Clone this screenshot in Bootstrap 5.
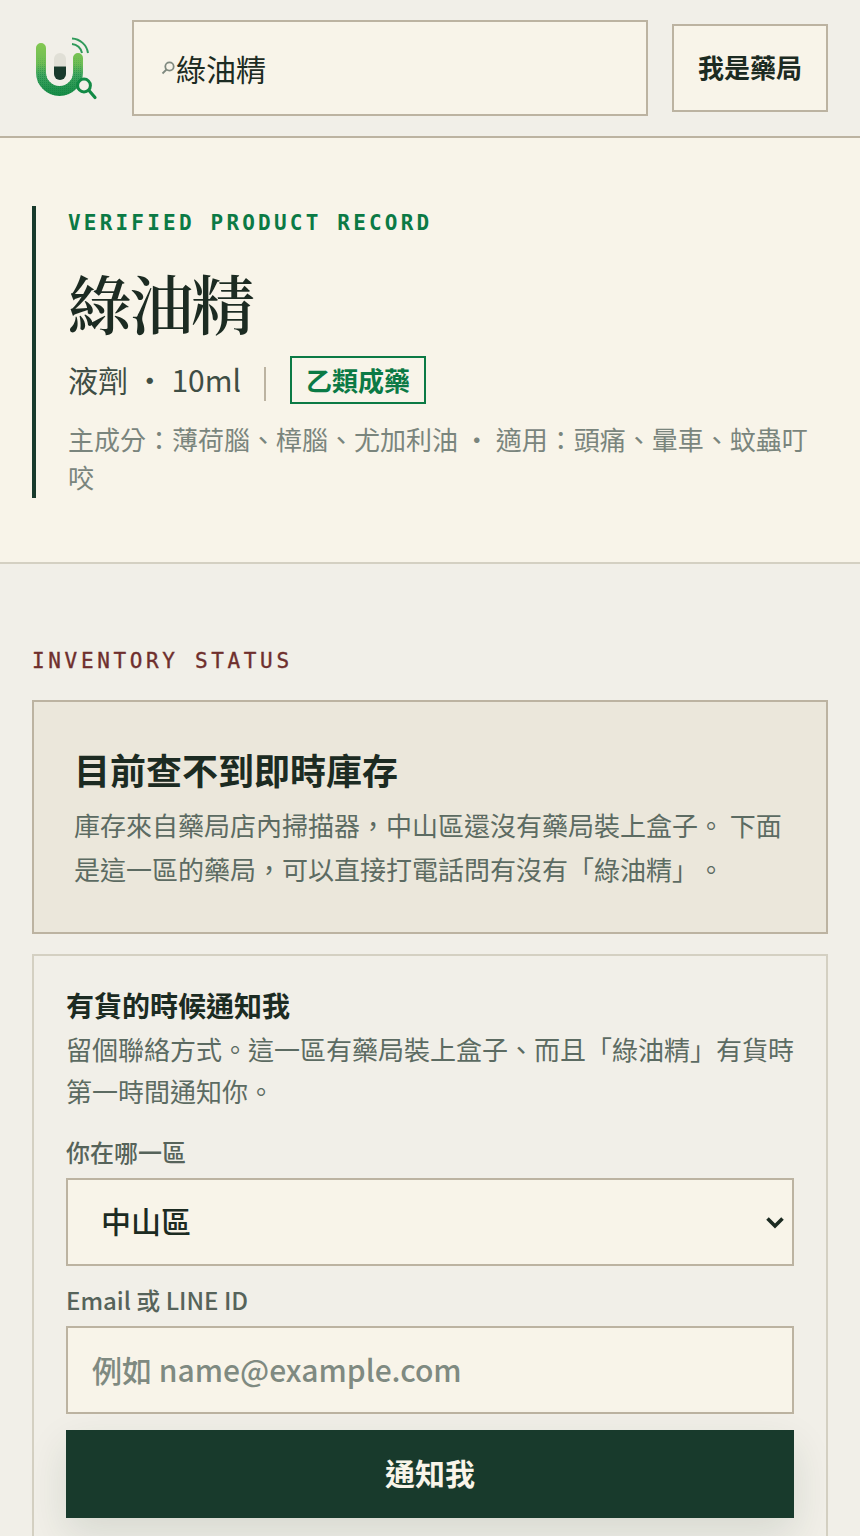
<!DOCTYPE html>
<html lang="zh-Hant">
<head>
<meta charset="utf-8">
<meta name="viewport" content="width=device-width, initial-scale=1">
<link href="https://cdn.jsdelivr.net/npm/bootstrap@5.3.0/dist/css/bootstrap.min.css" rel="stylesheet">
<style>
html,body{height:1536px;overflow:hidden}
body{background:#f1efe8;color:#1c2b22;font-family:"Noto Sans CJK TC","Noto Sans",sans-serif;text-spacing-trim:space-all}
.top-bar{height:138px;padding:20px 32px;gap:24px;border-bottom:2px solid #bcb3a1;background:#f1efe8}
.logo-mark{width:76px;height:76px;flex:none}
.search-box{flex:1;height:96px;border:2px solid #bcb3a1;background:#f8f4e9;padding:0 26px;font-size:30px}
.search-glyph{width:16px;height:18px;flex:none}
.pharm-btn{width:156px;height:88px;border:2px solid #bcb3a1;background:#f8f4e9;font-size:26px;font-weight:700;color:#1c2b22;border-radius:0;padding:0 0 3px}
.hero-band{height:426px;background:#f8f4e9;border-bottom:2px solid #d4d0c2;padding:68px 32px 0}
.hero-inner{border-left:4px solid #183a2c;padding-left:32px;padding-top:1px;height:292px}
.mono-tag{font-family:"DejaVu Sans Mono",monospace;font-size:21px;line-height:32px}
.tag-green{color:#0b7a45;font-weight:700;letter-spacing:3.2px}
.title-main{font-family:"Noto Serif CJK TC","Noto Sans CJK TC",serif;font-size:64px;font-weight:600;letter-spacing:-2.5px;line-height:84px;margin:20px 0 0;color:#1c2b22}
.meta-row{font-size:30px;color:#3f4e45;margin-top:13px;gap:24px}
.meta-row>span:first-child{line-height:44px;padding-bottom:2px}
.meta-sep{width:2px;height:34px;background:#bcb3a1;margin:7px 0 0 -1px}
.class-tag{border:2px solid #0b7a45;color:#0b7a45;font-size:26px;font-weight:700;line-height:44px;padding:0 14px}
.hero-note{font-size:26px;line-height:38px;color:#7a857d;margin:16px 0 0}
.status-sec{padding:81px 32px 0}
.tag-red{color:#6f2f2d;letter-spacing:3.65px;margin-bottom:23px;-webkit-text-stroke:.35px #6f2f2d}
.empty-box{height:234px;border:2px solid #bcb3a1;background:#ebe7db;padding:42px 40px 0}
.empty-title{font-size:36px;font-weight:700;line-height:50px;margin:0 0 9px;color:#1c2b22}
.empty-text{font-size:26px;line-height:44px;color:#5c6b62;margin:0}
.notify-box{height:600px;margin-top:20px;border:2px solid #d4d0c2;padding:29px 32px}
.notify-title{font-size:28px;font-weight:700;line-height:40px;margin:0 0 3px}
.notify-text{font-size:26px;line-height:42px;color:#5c6b62;margin:0 0 22px}
.field-label{font-size:24px;font-weight:500;line-height:36px;color:#56635a;display:block;margin-bottom:8px}
.field-ctl{height:88px;border:2px solid #bcb3a1;border-radius:0;background-color:#f8f4e9;font-size:30px;color:#1c2b22;box-shadow:none}
select.field-ctl{padding:5px 40px 9px 33px;font-weight:500;background-image:url("data:image/svg+xml,%3Csvg xmlns='http://www.w3.org/2000/svg' viewBox='0 0 18 13'%3E%3Cpath d='M1.5 2.5L9 10l7.5-7.5' fill='none' stroke='%231c2b22' stroke-width='3.6'/%3E%3C/svg%3E");background-position:right 8px center;background-size:18px 13px;margin-bottom:16px}
input.field-ctl{padding:5px 24px 7px;margin-bottom:16px;font-weight:500}
input.field-ctl::placeholder{color:#7f8a81}
.send-btn{width:100%;height:88px;background:#183a2c;color:#f8f4e9;border:0;border-radius:0;font-size:30px;font-weight:700;padding:0 0 4px;box-shadow:0 16px 40px rgba(24,58,44,.12)}
</style>
</head>
<body>
<header class="top-bar d-flex align-items-center">
  <svg class="logo-mark" viewBox="0 0 76 76" aria-label="logo">
    <defs>
      <linearGradient id="u1" gradientUnits="userSpaceOnUse" x1="0" y1="13" x2="0" y2="66"><stop offset="0" stop-color="#83c851"/><stop offset=".4" stop-color="#6dbc55"/><stop offset=".6" stop-color="#3fa560"/><stop offset="1" stop-color="#148a45"/></linearGradient>
      <pattern id="dots" width="2" height="2" patternUnits="userSpaceOnUse"><rect width="1" height="1" fill="#0f8040" opacity=".55"/></pattern>
      <linearGradient id="fade" gradientUnits="userSpaceOnUse" x1="0" y1="26" x2="0" y2="46"><stop offset="0" stop-color="#fff" stop-opacity="0"/><stop offset="1" stop-color="#fff"/></linearGradient>
      <mask id="fm"><rect width="76" height="76" fill="url(#fade)"/></mask>
    </defs>
    <path d="M9 18V42.500A18.500 18.500 0 0 0 46 42.500V28" fill="none" stroke="url(#u1)" stroke-width="10" stroke-linecap="round"/>
    <path d="M9 18V42.500A18.500 18.500 0 0 0 46 42.500V28" fill="none" stroke="url(#dots)" stroke-width="10" stroke-linecap="round" mask="url(#fm)"/>
    <path d="M22 29a6 6 0 0 1 12 0v7.500H22z" fill="#e0dfd6"/>
    <path d="M22 36.500h12v7.500a6 6 0 0 1-12 0z" fill="#183a2c"/>
    <path d="M40 8.500a17 17 0 0 1 16 14.500M40 14a11 11 0 0 1 10 9" fill="none" stroke="#2f9a5a" stroke-width="2"/>
    <circle cx="52" cy="55.500" r="6.400" fill="#f1efe8" stroke="#128a45" stroke-width="3"/>
    <path d="M57 60.500l6 7" stroke="#128a45" stroke-width="3.200" stroke-linecap="round"/>
  </svg>
  <div class="search-box d-flex align-items-center">
    <svg class="search-glyph" viewBox="0 0 16 18"><circle cx="9.500" cy="7.500" r="4.200" fill="none" stroke="#7f897f" stroke-width="1.800"/><path d="M6.500 10.500l-4 4" stroke="#7f897f" stroke-width="1.800"/></svg>
    <span>綠油精</span>
  </div>
  <button class="btn pharm-btn" type="button">我是藥局</button>
</header>
<section class="hero-band">
  <div class="hero-inner">
    <div class="mono-tag tag-green">VERIFIED PRODUCT RECORD</div>
    <h1 class="title-main">綠油精</h1>
    <div class="meta-row d-flex align-items-center">
      <span>液劑 ・ 10ml</span><span class="meta-sep"></span><span class="class-tag">乙類成藥</span>
    </div>
    <p class="hero-note">主成分：薄荷腦、樟腦、尤加利油 ・ 適用：頭痛、暈車、蚊蟲叮咬</p>
  </div>
</section>
<section class="status-sec">
  <div class="mono-tag tag-red">INVENTORY STATUS</div>
  <div class="empty-box">
    <h2 class="empty-title">目前查不到即時庫存</h2>
    <p class="empty-text">庫存來自藥局店內掃描器，中山區還沒有藥局裝上盒子。 下面是這一區的藥局，可以直接打電話問有沒有「綠油精」。</p>
  </div>
  <form class="notify-box">
    <h3 class="notify-title">有貨的時候通知我</h3>
    <p class="notify-text">留個聯絡方式。這一區有藥局裝上盒子、而且「綠油精」有貨時第一時間通知你。</p>
    <label class="field-label" for="area">你在哪一區</label>
    <select class="form-select field-ctl" id="area"><option>中山區</option></select>
    <label class="field-label" for="contact">Email 或 LINE ID</label>
    <input class="form-control field-ctl" id="contact" placeholder="例如 name@example.com">
    <button class="btn send-btn" type="button">通知我</button>
  </form>
</section>
</body>
</html>
